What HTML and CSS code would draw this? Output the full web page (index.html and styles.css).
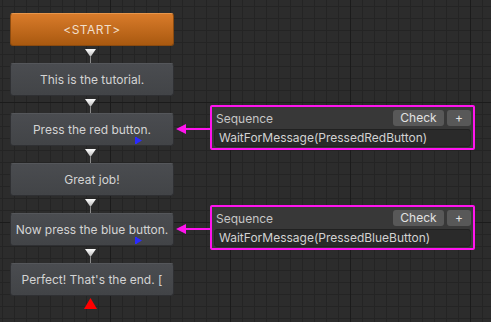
FILE: index.html
```html
<!DOCTYPE html>
<html>
  <head>
    <title>Conversation Graph</title>
    <link rel="stylesheet" href="styles.css">
  </head>
  <body>
    <div id="graph">
      <div class="row">
        <div class="node start">&lt;START&gt;</div>
      </div>
      <div class="link">
        <svg class="tip" width="11" height="8"><polygon points="0,0 11,0 5.5,8" fill="url(#tipFill)" /></svg>
        <div class="stem"></div>
      </div>

      <div class="row">
        <div class="node">This is the tutorial.</div>
      </div>
      <div class="link">
        <svg class="tip" width="11" height="8"><polygon points="0,0 11,0 5.5,8" fill="url(#tipFill)" /></svg>
        <div class="stem"></div>
      </div>

      <div class="row">
        <div class="node">
          Press the red button.
          <svg class="flag" width="7" height="7"><rect x="0" y="0" width="2" height="7" fill="#2a2aff" /><polygon points="1,0 7,3.5 1,7" fill="#2a2aff" /></svg>
        </div>
        <svg class="wire" width="36" height="33"><polygon points="2,16 12,11 12,21" fill="#ff14ee" /><rect x="11" y="15" width="25" height="2" fill="#ff14ee" /></svg>
        <div class="seq">
          <div class="seq-head">
            <span class="seq-label">Sequence</span>
            <button class="btn check">Check</button>
            <button class="btn plus">+</button>
          </div>
          <div class="seq-field">WaitForMessage(PressedRedButton)</div>
        </div>
      </div>
      <div class="link">
        <svg class="tip" width="11" height="8"><polygon points="0,0 11,0 5.5,8" fill="url(#tipFill)" /></svg>
        <div class="stem"></div>
      </div>

      <div class="row">
        <div class="node">Great job!</div>
      </div>
      <div class="link">
        <svg class="tip" width="11" height="8"><polygon points="0,0 11,0 5.5,8" fill="url(#tipFill)" /></svg>
        <div class="stem"></div>
      </div>

      <div class="row">
        <div class="node">
          Now press the blue button.
          <svg class="flag" width="7" height="7"><rect x="0" y="0" width="2" height="7" fill="#2a2aff" /><polygon points="1,0 7,3.5 1,7" fill="#2a2aff" /></svg>
        </div>
        <svg class="wire" width="36" height="33"><polygon points="2,16 12,11 12,21" fill="#ff14ee" /><rect x="11" y="15" width="25" height="2" fill="#ff14ee" /></svg>
        <div class="seq">
          <div class="seq-head">
            <span class="seq-label">Sequence</span>
            <button class="btn check">Check</button>
            <button class="btn plus">+</button>
          </div>
          <div class="seq-field">WaitForMessage(PressedBlueButton)</div>
        </div>
      </div>
      <div class="link">
        <svg class="tip" width="11" height="8"><polygon points="0,0 11,0 5.5,8" fill="url(#tipFill)" /></svg>
        <div class="stem"></div>
      </div>

      <div class="row">
        <div class="node">Perfect! That's the end. [</div>
      </div>
      <div class="end">
        <svg width="13" height="11"><polygon points="6.5,0 13,11 0,11" fill="#ff0000" /></svg>
      </div>
    </div>

    <svg width="0" height="0" class="defs">
      <defs>
        <linearGradient id="tipFill" x1="0" y1="0" x2="0" y2="1">
          <stop offset="0" stop-color="#ffffff" />
          <stop offset="1" stop-color="#b4b4b4" />
        </linearGradient>
      </defs>
    </svg>
  </body>
</html>
```

FILE: styles.css
```css
html,
body {
  margin: 0;
  height: 100%;
}

body {
  width: 491px;
  height: 322px;
  overflow: hidden;
  font-family: Inter, "Noto Sans", sans-serif;
  font-size: 12px;
  background-color: #2c2c2c;
  background-image:
    linear-gradient(to right, #1b1b1b 1px, transparent 1px),
    linear-gradient(to bottom, #1b1b1b 1px, transparent 1px),
    linear-gradient(to right, #242424 1px, transparent 1px),
    linear-gradient(to bottom, #242424 1px, transparent 1px);
  background-size: 120px 120px, 120px 120px, 12px 12px, 12px 12px;
  background-position: 110px 0, 0 102px, 2px 0, 0 6px;
}

.defs {
  position: absolute;
}

#graph {
  padding: 13px 0 0 10px;
}

.row {
  display: flex;
  align-items: flex-start;
  height: 33px;
}

.node {
  position: relative;
  box-sizing: border-box;
  width: 164px;
  height: 33px;
  flex: none;
  display: flex;
  align-items: center;
  justify-content: center;
  border-radius: 3px;
  border: 1px solid #2f3033;
  border-top-color: #55575b;
  background: linear-gradient(#4a4c50, #424447);
  color: #d4d4d4;
  white-space: nowrap;
  padding-bottom: 1px;
}

.start {
  background: linear-gradient(#d97b2a, #a95910);
  border-color: #8a4a10;
  border-top-color: #e8974c;
  color: #f1dfcb;
  letter-spacing: 0.5px;
}

.flag {
  position: absolute;
  left: 124px;
  top: 23px;
}

.link {
  height: 14px;
  padding: 3px 0 0 75px;
}

.tip {
  display: block;
}

.stem {
  width: 1px;
  height: 6px;
  margin-left: 5px;
  background: #8c8c8c;
}

.wire {
  flex: none;
  display: block;
}

.seq {
  box-sizing: border-box;
  width: 265px;
  height: 45px;
  margin-top: -8px;
  padding: 3px 2px 1px 1px;
  border: 2px solid #ff14ee;
  border-radius: 2px;
  background: #383838;
}

.seq-head {
  display: flex;
  align-items: center;
  height: 16px;
}

.seq-label {
  flex: 1;
  padding-left: 3px;
  color: #c6c6c6;
}

.btn {
  height: 16px;
  border: none;
  border-radius: 3px;
  background: #585858;
  color: #e2e2e2;
  font-family: inherit;
  font-size: 12px;
  padding: 0;
  line-height: 16px;
}

.check {
  width: 51px;
}

.plus {
  width: 24px;
  margin-left: 3px;
}

.seq-field {
  box-sizing: border-box;
  height: 18px;
  margin-top: 3px;
  margin-left: 1px;
  padding-left: 4px;
  line-height: 16px;
  border: 1px solid #212121;
  border-radius: 3px;
  background: #2a2a2a;
  color: #d2d2d2;
}

.end {
  padding: 2px 0 0 74px;
}

.end svg {
  display: block;
}
```
